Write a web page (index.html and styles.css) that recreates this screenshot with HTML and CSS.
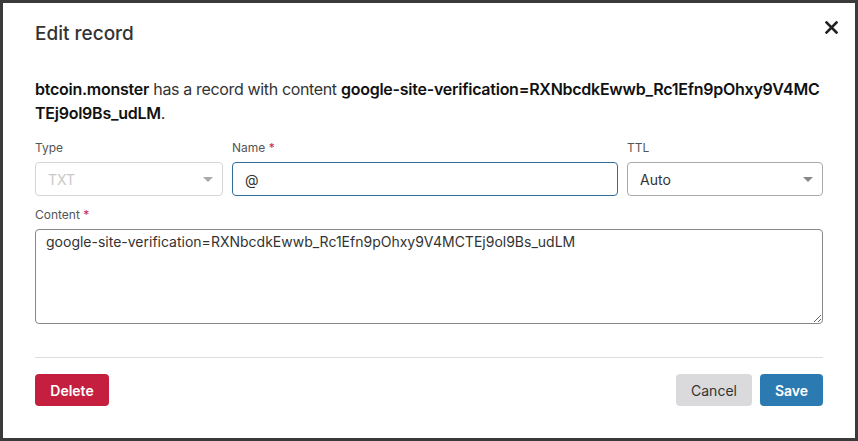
FILE: index.html
```html
<!DOCTYPE html>
<html>
<head>
<meta charset="utf-8">
<link rel="stylesheet" href="styles.css">
</head>
<body>
<div class="modal">
  <div class="modal-header">
    <h2 class="title">Edit record</h2>
    <button class="close" aria-label="Close">
      <svg width="13" height="13" viewBox="0 0 13 13"><path d="M1.5 1.5 L11.5 11.5 M11.5 1.5 L1.5 11.5" stroke="#222" stroke-width="2.6" stroke-linecap="square"/></svg>
    </button>
  </div>
  <div class="modal-body">
    <p class="intro"><b>btcoin.monster</b> has a record with content <b>google-site-verification=RXNbcdkEwwb_Rc1Efn9pOhxy9V4MCTEj9ol9Bs_udLM</b>.</p>
    <div class="row">
      <div class="field">
        <label class="label">Type</label>
        <div class="select disabled"><span>TXT</span><i class="caret"></i></div>
      </div>
      <div class="field">
        <label class="label">Name <span class="req">*</span></label>
        <div class="input focus">@</div>
      </div>
      <div class="field">
        <label class="label">TTL</label>
        <div class="select"><span>Auto</span><i class="caret"></i></div>
      </div>
    </div>
    <div class="field content-field">
      <label class="label">Content <span class="req">*</span></label>
      <textarea class="textarea">google-site-verification=RXNbcdkEwwb_Rc1Efn9pOhxy9V4MCTEj9ol9Bs_udLM</textarea>
    </div>
  </div>
  <div class="modal-footer">
    <button class="btn btn-danger">Delete</button>
    <div class="right">
      <button class="btn btn-default">Cancel</button>
      <button class="btn btn-primary">Save</button>
    </div>
  </div>
</div>
</body>
</html>
```
FILE: styles.css
```css
* { box-sizing: border-box; }
html, body { margin: 0; padding: 0; }
body {
  background: #3a3a3a;
  font-family: Inter, "Noto Sans", sans-serif;
  color: #333;
  padding: 3px;
  height: 441px;
  overflow: hidden;
}
.modal {
  background: #fff;
  height: 435px;
  padding: 0 32px;
  display: flex;
  flex-direction: column;
}
.modal-header {
  display: flex;
  justify-content: space-between;
  align-items: flex-start;
  padding-top: 18px;
}
.title {
  margin: 0;
  font-size: 19px;
  font-weight: 500;
  line-height: 26px;
  color: #333;
}
.close {
  border: 0;
  background: none;
  padding: 0;
  margin: 0 -15px 0 0;
  width: 13px;
  height: 13px;
  cursor: pointer;
}
.close svg { display: block; }
.modal-body { padding-top: 30px; }
.intro {
  margin: 0;
  font-size: 16px;
  line-height: 24px;
  color: #333;
  word-break: break-all;
  letter-spacing: -0.35px;
}
.intro b { color: #111; font-weight: 600; letter-spacing: -0.25px; }
.row {
  display: grid;
  grid-template-columns: 188px 386px 196px;
  gap: 9px;
  margin-top: 15px;
}
.field { display: flex; flex-direction: column; }
.label {
  font-size: 12px;
  line-height: 16px;
  color: #555;
  margin-bottom: 6px;
}
.req { color: #c8284a; }
.select, .input {
  height: 34px;
  border: 1px solid #aaa;
  border-radius: 4px;
  display: flex;
  align-items: center;
  padding: 0 9px 0 12px;
  font-size: 14px;
  color: #333;
  justify-content: space-between;
}
.select.disabled { border-color: #d6d6d6; color: #c8c8c8; }
.input.focus { border-color: #2f6e9c; }
.caret {
  width: 0; height: 0;
  border-left: 5px solid transparent;
  border-right: 5px solid transparent;
  border-top: 5px solid #888;
}
.select.disabled .caret { border-top-color: #aaa; }
.content-field { margin-top: 11px; }
.textarea {
  height: 95px;
  border: 1px solid #888;
  border-radius: 4px;
  padding: 2px 10px;
  font-family: inherit;
  font-size: 14px;
  line-height: 20px;
  color: #333;
  resize: vertical;
  margin: 0;
}
.modal-footer {
  margin-top: 33px;
  border-top: 1px solid #ddd;
  padding-top: 16px;
  display: flex;
  justify-content: space-between;
}
.right { display: flex; gap: 8px; }
.btn {
  height: 32px;
  border: 0;
  border-radius: 4px;
  font-family: inherit;
  font-size: 14px;
  font-weight: 600;
  padding: 0;
}
.btn-danger { background: #c41f3e; color: #fff; width: 74px; }
.btn-default { background: #dadadc; color: #333; width: 76px; font-weight: 400; }
.btn-primary { background: #2b7bb2; color: #fff; width: 63px; }
```
